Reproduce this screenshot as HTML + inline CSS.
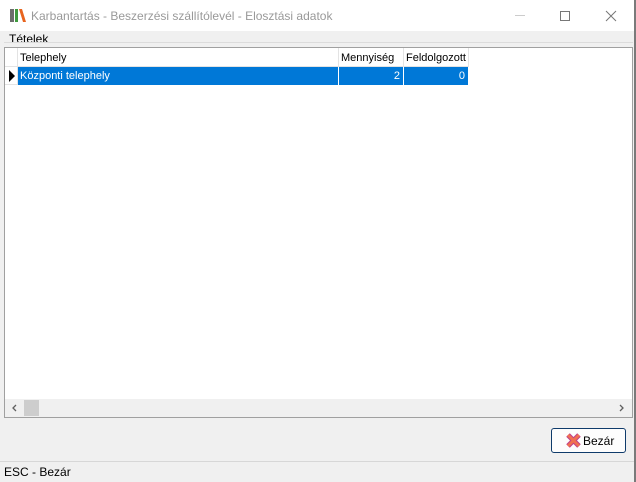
<!DOCTYPE html>
<html><head><style>
*{margin:0;padding:0;box-sizing:border-box}
body{width:636px;height:482px;background:#f0f0f0;font-family:"Liberation Sans",Arial,sans-serif;font-size:11px;color:#000;position:relative;overflow:hidden}
.abs{position:absolute}
#title{left:0;top:0;width:634px;height:31px;background:#fff}
#rb{left:634px;top:0;width:2px;height:482px;background:#7a7a7a}
#grid{left:4px;top:47px;width:629px;height:371px;background:#fff;border:1px solid #a0a0a0}
.hc{position:absolute;top:0;height:19px;border-right:1px solid #e3e3e3;border-bottom:1px solid #e3e3e3;padding:4px 0 0 2px;background:#fff}
.dc{position:absolute;top:19px;height:18px;background:#0078d7;color:#fff;border-right:1px solid #fff;padding:3px 3px 0 2px}
</style></head><body>
<div id="title" class="abs">
 <div class="abs" style="left:10px;top:9px;width:4px;height:13px;background:#6d6d6d"></div>
 <div class="abs" style="left:15px;top:9px;width:3px;height:13px;background:#3f9a3f"></div>
 <svg class="abs" style="left:18px;top:9px" width="9" height="13"><polygon points="1,0 4,0 8,13 5,13" fill="#e8641e"/></svg>
 <div class="abs" style="left:31px;top:9px;font-size:12px;color:#999">Karbantartás - Beszerzési szállítólevél - Elosztási adatok</div>
 <div class="abs" style="left:515px;top:15px;width:10px;height:1px;background:#ccc"></div>
 <div class="abs" style="left:560px;top:11px;width:10px;height:10px;border:1px solid #777"></div>
 <svg class="abs" style="left:605px;top:10px" width="12" height="12"><path d="M1 1L11 11M11 1L1 11" stroke="#777" stroke-width="1"/></svg>
</div>
<div id="rb" class="abs"></div>
<div class="abs" style="left:9px;top:32px;font-size:12px">Tételek</div>
<div class="abs" style="left:4px;top:42px;width:629px;height:1px;background:#dcdcdc"></div>
<div id="grid" class="abs">
 <div class="hc" style="left:0;width:13px"></div>
 <div class="hc" style="left:13px;width:321px">Telephely</div>
 <div class="hc" style="left:334px;width:65px">Mennyiség</div>
 <div class="hc" style="left:399px;width:65px">Feldolgozott</div>
 <div class="abs" style="left:0;top:19px;width:13px;height:18px;border-right:1px solid #e3e3e3;border-bottom:1px solid #e3e3e3"></div>
 <svg class="abs" style="left:4px;top:22px" width="6" height="12"><polygon points="0,0 6,6 0,12" fill="#000"/></svg>
 <div class="dc" style="left:13px;width:321px">Központi telephely</div>
 <div class="dc" style="left:334px;width:65px;text-align:right">2</div>
 <div class="dc" style="left:399px;width:65px;text-align:right">0</div>
 <div class="abs" style="left:0;top:351px;width:627px;height:18px;background:#f0f0f0"></div>
 <div class="abs" style="left:19px;top:352px;width:15px;height:16px;background:#cdcdcd"></div>
 <svg class="abs" style="left:7px;top:356px" width="6" height="8"><path d="M4 1L1 4L4 7" stroke="#606060" stroke-width="1.3" fill="none"/></svg>
 <svg class="abs" style="left:614px;top:356px" width="6" height="8"><path d="M1 1L4 4L1 7" stroke="#606060" stroke-width="1.3" fill="none"/></svg>
</div>
<div class="abs" style="left:551px;top:428px;width:75px;height:25px;border:1px solid #0f3b6b;border-radius:3px;background:#fdfdfd">
 <svg class="abs" style="left:14px;top:4px" width="15" height="15"><path d="M2 2L13 13M13 2L2 13" stroke="#c0408a" stroke-width="5"/><path d="M2 2L13 13M13 2L2 13" stroke="#f07050" stroke-width="3"/></svg>
 <div class="abs" style="left:31px;top:5px;font-size:12px">Bezár</div>
</div>
<div class="abs" style="left:0;top:461px;width:634px;height:1px;background:#d7d7d7"></div>
<div class="abs" style="left:4px;top:465px;font-size:12px">ESC - Bezár</div>
</body></html>
